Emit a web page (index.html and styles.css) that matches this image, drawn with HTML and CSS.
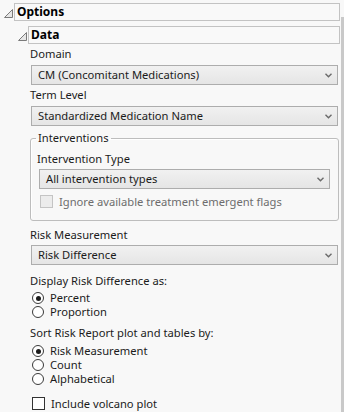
FILE: index.html
```html
<!DOCTYPE html>
<html lang="en">
<head>
    <meta charset="UTF-8">
    <title>Options</title>
    <link rel="stylesheet" href="styles.css">
</head>
<body>
    <div class="page">
        <div class="content">
            <!-- Options outline -->
            <div class="outline-head">
                <svg class="tri" width="9" height="10" viewBox="0 0 9 10"><polygon points="0.5,9.5 8.5,1.5 8.5,9.5" fill="#e6e6e6" stroke="#7a7a7a"/></svg>
                <div class="head-box">Options</div>
            </div>

            <div class="section">
                <div class="outline-head">
                    <svg class="tri" width="9" height="10" viewBox="0 0 9 10"><polygon points="0.5,9.5 8.5,1.5 8.5,9.5" fill="#e6e6e6" stroke="#7a7a7a"/></svg>
                    <div class="head-box">Data</div>
                </div>

                <div class="body">
                    <div class="label">Domain</div>
                    <div class="select">CM (Concomitant Medications)<svg class="chev" width="7" height="5" viewBox="0 0 7 5"><polyline points="0.5,0.8 3.5,3.8 6.5,0.8" fill="none" stroke="#6a6a6a" stroke-width="1.4"/></svg></div>

                    <div class="label">Term Level</div>
                    <div class="select">Standardized Medication Name<svg class="chev" width="7" height="5" viewBox="0 0 7 5"><polyline points="0.5,0.8 3.5,3.8 6.5,0.8" fill="none" stroke="#6a6a6a" stroke-width="1.4"/></svg></div>

                    <fieldset class="group">
                        <legend>Interventions</legend>
                        <div class="label">Intervention Type</div>
                        <div class="select">All intervention types<svg class="chev" width="7" height="5" viewBox="0 0 7 5"><polyline points="0.5,0.8 3.5,3.8 6.5,0.8" fill="none" stroke="#6a6a6a" stroke-width="1.4"/></svg></div>
                        <div class="check disabled"><span class="box"></span>Ignore available treatment emergent flags</div>
                    </fieldset>

                    <div class="label risk">Risk Measurement</div>
                    <div class="select">Risk Difference<svg class="chev" width="7" height="5" viewBox="0 0 7 5"><polyline points="0.5,0.8 3.5,3.8 6.5,0.8" fill="none" stroke="#6a6a6a" stroke-width="1.4"/></svg></div>

                    <div class="label display">Display Risk Difference as:</div>
                    <div class="radios first">
                        <div class="radio on"><span class="dot"></span>Percent</div>
                        <div class="radio"><span class="dot"></span>Proportion</div>
                    </div>

                    <div class="label sort">Sort Risk Report plot and tables by:</div>
                    <div class="radios">
                        <div class="radio on"><span class="dot"></span>Risk Measurement</div>
                        <div class="radio"><span class="dot"></span>Count</div>
                        <div class="radio"><span class="dot"></span>Alphabetical</div>
                    </div>

                    <div class="check volcano"><span class="box"></span>Include volcano plot</div>
                </div>
            </div>
        </div>
        <div class="scrollbar"></div>
    </div>
</body>
</html>
```

FILE: styles.css
```css
body {
    margin: 0;
    background-color: #f8f8f8;
    font-family: 'Noto Sans', 'Open Sans', sans-serif;
    font-size: 11.2px;
    color: #1b1b1b;
}

.page {
    display: flex;
    height: 412px;
    overflow: hidden;
}

.content {
    flex: 1;
    padding: 3px 1px 0 4px;
}

.scrollbar {
    width: 3px;
    margin-top: 17px;
    background-color: #c9c9c9;
}

.outline-head {
    display: flex;
    align-items: center;
    gap: 1px;
}

.tri {
    flex: none;
    margin-top: 1px;
}

.head-box {
    flex: 1;
    height: 16px;
    line-height: 16px;
    border: 1px solid #c3c3c3;
    background: #f9f9f9;
    padding-left: 2px;
    font-weight: bold;
    font-size: 12px;
    color: #000;
}

.section {
    margin-top: 5px;
    padding-left: 14px;
}

.body {
    padding: 0 1px 0 12px;
}

.label {
    height: 16px;
    line-height: 16px;
    white-space: nowrap;
    margin: 2px 0 3px;
}

.label.risk {
    margin: 6px 0 2px;
}

.label.display {
    margin: 8px 0 0;
}

.label.sort {
    margin: 6px 0 0;
}

.select {
    position: relative;
    height: 18px;
    line-height: 18px;
    margin: 0 1px 0 1px;
    padding-left: 6px;
    border: 1px solid #adadad;
    background: linear-gradient(#f1f1f1, #e5e5e5);
}

.chev {
    position: absolute;
    right: 5px;
    top: 7px;
}

.group {
    margin: 5px 0 0 0;
    padding: 0 8px 12px 6px;
    border: 1px solid #bdbdbd;
    border-radius: 3px;
    box-shadow: 1px 1px 0 #fff inset;
}

.group legend {
    padding: 0 2px;
    margin-left: -1px;
    line-height: 14px;
}

.group .label {
    margin: 6px 0 2px;
}

.group .select {
    margin: 0 0 0 2px;
}

.check {
    display: flex;
    align-items: center;
    gap: 6px;
    height: 14px;
    white-space: nowrap;
}

.check .box {
    flex: none;
    width: 11px;
    height: 11px;
    border: 1px solid #333;
    background: #fff;
}

.check.disabled {
    color: #6d6d6d;
    margin: 5px 0 0 3px;
}

.check.disabled .box {
    border-color: #c4c4c4;
    background: #ececec;
}

.volcano {
    margin: 10px 0 0 2px;
}

.radios {
    margin-top: 3px;
    padding-left: 2px;
}

.radios.first {
    margin-top: 2px;
}

.radio {
    display: flex;
    align-items: center;
    gap: 6px;
    height: 14px;
    line-height: 14px;
    white-space: nowrap;
}

.radio .dot {
    flex: none;
    position: relative;
    width: 10px;
    height: 10px;
    border: 1px solid #3a3a3a;
    border-radius: 50%;
    background: #fff;
}

.radio.on .dot::after {
    content: "";
    position: absolute;
    left: 2.5px;
    top: 2.5px;
    width: 5px;
    height: 5px;
    border-radius: 50%;
    background: #1b1b1b;
}
```
